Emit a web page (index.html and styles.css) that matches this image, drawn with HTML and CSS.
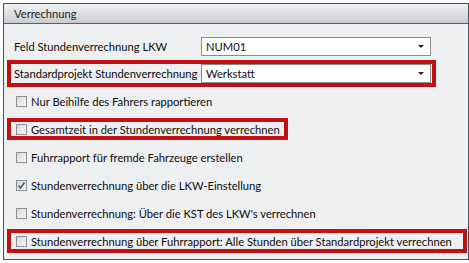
FILE: index.html
```html
<!DOCTYPE html>
<html lang="de">
<head>
    <meta charset="UTF-8">
    <title>Verrechnung</title>
    <link rel="stylesheet" href="styles.css">
</head>
<body>

    <div class="panel">
        <div class="panel-head">Verrechnung</div>

        <div class="panel-body">
            <div class="field-row">
                <span class="field-label">Feld Stundenverrechnung LKW</span>
                <div class="select">NUM01<span class="arrow"></span></div>
            </div>
            <div class="field-row mark">
                <span class="field-label">Standardprojekt Stundenverrechnung</span>
                <div class="select">Werkstatt<span class="arrow"></span></div>
            </div>

            <div class="checks">
                <div class="check-row">
                    <span class="box"></span>Nur Beihilfe des Fahrers rapportieren
                </div>
                <div class="check-row mark short">
                    <span class="box"></span>Gesamtzeit in der Stundenverrechnung verrechnen
                </div>
                <div class="check-row">
                    <span class="box"></span>Fuhrrapport für fremde Fahrzeuge erstellen
                </div>
                <div class="check-row">
                    <span class="box checked">
                        <svg width="9" height="9" viewBox="0 0 9 9"><path d="M1.5 4.5 L3.5 7 L7.5 1.5" fill="none" stroke="#3d5a8a" stroke-width="1.6"/></svg>
                    </span>Stundenverrechnung über die LKW-Einstellung
                </div>
                <div class="check-row">
                    <span class="box"></span>Stundenverrechnung: Über die KST des LKW's verrechnen
                </div>
                <div class="check-row mark wide">
                    <span class="box"></span>Stundenverrechnung über Fuhrrapport: Alle Stunden über Standardprojekt verrechnen
                </div>
            </div>
        </div>
    </div>

</body>
</html>
```

FILE: styles.css
```css
* {
    box-sizing: border-box;
}
body {
    background-color: #ffffff;
    color: #0d0d0d;
    font-family: 'Lato', sans-serif;
    font-size: 11.2px;
    margin: 0;
    padding: 0;
}
.panel {
    margin: 3px 0 0 3px;
    width: 466px;
    height: 257px;
    border: 1px solid #4b4f57;
    background-color: #eeeff1;
}
.panel-head {
    height: 20px;
    line-height: 19px;
    padding-left: 10px;
    border-bottom: 1px solid #5a5e66;
    background: linear-gradient(#f2f3f5, #c9cbd0);
    color: #1e1e1e;
}
.panel-body {
    padding-top: 9px;
}
.field-row {
    display: flex;
    align-items: center;
    width: 429px;
    height: 27px;
    margin-left: 3px;
    padding-left: 3px;
    border: 4px solid transparent;
}
.field-label {
    width: 187px;
    flex-shrink: 0;
    white-space: nowrap;
}
.select {
    position: relative;
    width: 230px;
    height: 19px;
    line-height: 17px;
    padding-left: 4px;
    background-color: #ffffff;
    border: 1px solid #8c8c8c;
}
.arrow {
    position: absolute;
    right: 6px;
    top: 7px;
    border-left: 3px solid transparent;
    border-right: 3px solid transparent;
    border-top: 3px solid #222222;
}
.checks {
    margin-top: 3px;
    display: flex;
    flex-direction: column;
    gap: 6px;
}
.check-row {
    display: flex;
    align-items: center;
    height: 22px;
    margin-left: 3px;
    padding-left: 5px;
    border: 4px solid transparent;
    white-space: nowrap;
}
.box {
    flex-shrink: 0;
    width: 11px;
    height: 11px;
    margin-right: 4px;
    border: 1px solid #8e8f8f;
    background: linear-gradient(135deg, #d8d8d8, #f6f6f6);
    display: flex;
    align-items: center;
    justify-content: center;
}
.mark {
    border-color: #bf1111;
}
.short {
    width: 281px;
}
.wide {
    width: 460px;
    height: 24px;
    margin-top: -1px;
}
```
